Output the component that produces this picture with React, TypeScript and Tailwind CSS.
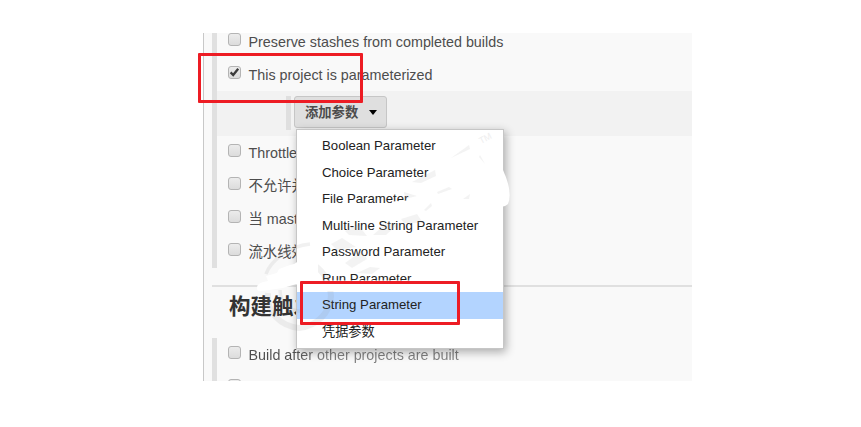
import React from "react";

const options = [
  "Boolean Parameter",
  "Choice Parameter",
  "File Parameter",
  "Multi-line String Parameter",
  "Password Parameter",
  "Run Parameter",
  "String Parameter",
  "凭据参数",
];

function Checkbox({ checked = false }: { checked?: boolean }) {
  return (
    <span className="mb-[5px] flex h-[13px] w-[13px] shrink-0 items-center justify-center rounded-[3px] border border-[#b4b4b4] bg-gradient-to-b from-[#ececec] to-[#dcdcdc]">
      {checked && (
        <svg viewBox="0 0 11 11" className="h-[11px] w-[11px]" fill="none" stroke="#3c3c3c" strokeWidth="2.3">
          <path d="M1.6 5.4 4.2 8 9.2 1.8" />
        </svg>
      )}
    </span>
  );
}

function Row({ label, checked, faded, cjk }: { label: string; checked?: boolean; faded?: boolean; cjk?: boolean }) {
  return (
    <div className="flex h-[33px] items-center gap-[7.5px] pl-[11px] text-[14.33px] whitespace-nowrap text-[#4d4d4d]">
      <Checkbox checked={checked} />
      <span
        className={`leading-[20px] ${cjk ? "pt-[1px]" : ""} ${faded ? "bg-gradient-to-r from-[#4d4d4d] from-20% to-[#808080] to-35% bg-clip-text text-transparent" : ""}`}
      >
        {label}
      </span>
    </div>
  );
}

function Dropdown() {
  return (
    <div className="absolute top-[129px] left-[296px] h-[220px] w-[208px] border border-[#c6c6c6] bg-white pt-[3px] text-[13.2px] text-[#222] shadow-[2px_3px_9px_rgba(0,0,0,0.32)]">
      {options.map((o) => (
        <div
          key={o}
          className={`flex h-[26.5px] items-center pl-[25px] whitespace-nowrap ${o === "String Parameter" ? "bg-[#b3d4ff]" : ""}`}
        >
          <span className={o === "凭据参数" ? "" : "-translate-y-[0.5px]"}>{o}</span>
        </div>
      ))}
    </div>
  );
}

function Smudges() {
  return (
    <svg className="absolute top-0 left-0 h-[427px] w-[861px]" viewBox="0 0 861 427" fill="none">
      <g stroke="#8c8c8c" strokeOpacity="0.12">
        <path d="M268 293C266 313 281 326 299 328 317 326 330 313 331 296 330 280 321 267 308 262" strokeWidth="6" />
        <path d="M266 274C270 262 288 246 310 244M280 290C280 304 291 312 303 311" strokeWidth="3.5" />
      </g>
      <g fill="#fff">
        <path d="M257 288Q256 283 268 281L266 276 277 273 279 269 290 265Q302 263 304 250L318 250 318 285 300 288 296 284 283 288 262 291Q257 292 257 288Z" />
        <path d="M498 165 503 170Q513 192 508 204 504 208 498 206Z" />
        <path d="M392 201.5 407 200.5 433 194 433 208 392 206Z" />
        <path d="M429 163 440 160 440 180 430 182Z" />
        <path d="M319 280.5 412 280.5 412 291 319 291Z" />
      </g>
      <g fill="#b4b4b4" fillOpacity="0.16">
        <path d="M451 158 469 145 470 149Z" />
        <path d="M412 182 435 170 436 176 421 183Z" />
        <path d="M404 192 417 196 405 199Z" />
        <path d="M424 210 431 203 432 206 426 211Z" />
        <path d="M437 192 449 187 452 189 438 194Z" />
        <path d="M463 199 470 194 469 199Z" />
        <path d="M480 155 485 164 479 157Z" />
        <path d="M345 231 358 225 367 236 349 235Z" />
        <path d="M373 235 388 222 397 225 386 235Z" />
        <path d="M401 219 417 214 423 223 404 223Z" />
        <path d="M331 244 342 238 356 247 337 250Z" />
        <path d="M345 263 362 251 367 259 352 268Z" />
        <path d="M357 273 370 267 380 268 372 274Z" />
      </g>
      <text x="481" y="144" fill="#eeeeee" fontSize="9" transform="rotate(-28 481 144)">TM</text>
    </svg>
  );
}

export default function App() {
  return (
    <div className="relative h-[427px] w-[861px] overflow-hidden bg-white pt-[33px] pl-[203px] font-['Liberation_Sans','Noto_Sans_CJK_SC',sans-serif]">
      <main className="h-[348px] w-[489px] overflow-hidden border-l border-[#c8c8c8] bg-[#f9f9f9] pl-[8px]">
        <section className="-mt-[8px] border-l-[5px] border-[#e0e0e0]">
          <Row label="Preserve stashes from completed builds" />
          <Row label="This project is parameterized" checked />
          <div className="flex h-[45px] bg-[#f2f2f2] pt-[5px] pl-[69px]">
            <div className="mr-[3px] h-[34px] w-[5px] bg-[#dfdfdf]" />
            <button className="flex h-[32px] w-[93px] items-center rounded-[3px] border border-[#c6c6c6] bg-[#dfdfdf] pl-[10px] text-[13.3px] font-bold text-[#4c4c4c]">
              <span className="pt-[1px]">添加参数</span>
              <span className="ml-[11px] border-x-[4.5px] border-t-[5px] border-x-transparent border-t-black" />
            </button>
          </div>
          <Row label="Throttle builds" />
          <Row label="不允许并发构建" cjk />
          <Row label="当 master 重启后" cjk />
          <Row label="流水线效率" cjk />
        </section>
        <div className="mt-[17px] h-[2px] bg-[#e0e0e0]" />
        <h2 className="flex h-[51px] items-start pt-[6px] pl-[17px] text-[21.5px] leading-[28px] font-bold text-[#333]">构建触发器</h2>
        <section className="border-l-[5px] border-[#e0e0e0]">
          <Row label="Build after other projects are built" faded />
          <Row label="" />
        </section>
      </main>
      <Dropdown />
      <Smudges />
      <div className="absolute top-[53px] left-[198px] h-[50px] w-[165px] rounded-[1px] border-[3px] border-[#ed1c24]" />
      <div className="absolute top-[281px] left-[300px] h-[44px] w-[160px] rounded-[1px] border-[3px] border-[#ed1c24]" />
    </div>
  );
}
